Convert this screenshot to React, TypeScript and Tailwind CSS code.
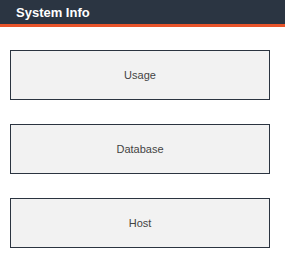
const App = () => {
  const items = ["Usage", "Database", "Host"];

  return (
    <div className="w-[285px] h-[262px] bg-white font-['Liberation_Sans',Arial,sans-serif]">
      {/* Header */}
      <div className="h-[27px] bg-[#2b3542] border-b-[3px] border-[#e8542a] flex items-center pl-4">
        <h1 className="text-[13px] font-bold text-white leading-none">System Info</h1>
      </div>

      {/* Buttons */}
      <div className="flex flex-col gap-6 px-[10px] pt-[23px]">
        {items.map((item, index) => (
          <button
            key={index}
            className="h-[50px] w-[260px] bg-[#f2f2f2] border border-[#2b3440] flex items-center justify-center text-[11px] text-[#444]"
          >
            {item}
          </button>
        ))}
      </div>
    </div>
  );
};

export default App;
